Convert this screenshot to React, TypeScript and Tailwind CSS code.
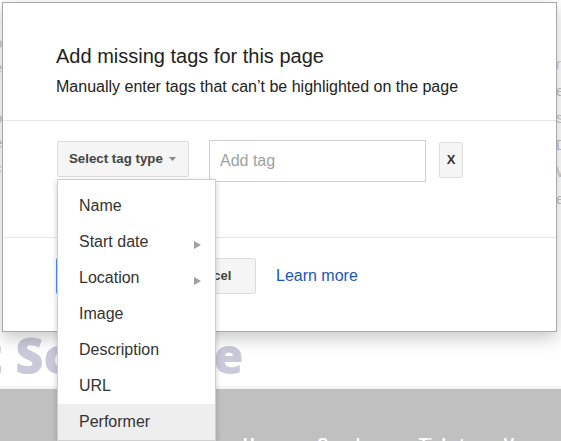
const MENU_ITEMS: { label: string; sub?: boolean; active?: boolean }[] = [
  { label: "Name" },
  { label: "Start date", sub: true },
  { label: "Location", sub: true },
  { label: "Image" },
  { label: "Description" },
  { label: "URL" },
  { label: "Performer", active: true },
];

// Page content sitting behind the dialog: only its edges peek out.
function BackgroundPage() {
  return (
    <div className="flex h-full flex-col">
      <div className="flex h-[333px] shrink-0 justify-between text-[15px] text-[#c4c4c4]">
        <div className="flex w-[4px] flex-col overflow-hidden pt-[30px] leading-[25px]">
          <span className="-ml-[6px]">o</span>
          <span className="-ml-[6px]">e</span>
          <span className="-ml-[6px]">&nbsp;</span>
          <span className="-ml-[6px]">o</span>
          <span className="-ml-[6px]">e</span>
          <span className="-ml-[6px]">c</span>
        </div>
        <div className="flex w-[5px] flex-col overflow-hidden pt-[50px] leading-[27px]">
          <span className="text-[#d8d0b8]">r</span>
          <span>e,</span>
          <span>s</span>
          <span>D</span>
          <span>W</span>
          <span>e</span>
        </div>
      </div>
      <div className="flex h-[53px] shrink-0 items-start overflow-hidden">
        <span className="-ml-[20px] -mt-[8px] font-['Open_Sans',sans-serif] text-[49px] font-extrabold leading-[60px] whitespace-nowrap text-[#c9c9d9]">
          t Schedule
        </span>
      </div>
      <div className="h-[3px] shrink-0 bg-[#f4f4f4]" />
      <div className="h-[60px] shrink-0 bg-[#c0c0c0] pt-[44px] pl-[243px]">
        <div className="flex gap-[30px] text-[16px] font-bold whitespace-nowrap text-white">
          <span>Home</span>
          <span>Speakers</span>
          <span>Tickets</span>
          <span>Venue</span>
          <span>Conf</span>
        </div>
      </div>
    </div>
  );
}

function TagTypeMenu() {
  return (
    <div className="absolute top-[179px] left-[57px] w-[159px] border border-[#cfcfcf] bg-white pt-[8px] shadow-[0_2px_6px_rgba(0,0,0,0.2)]">
      {MENU_ITEMS.map((item) => (
        <div
          key={item.label}
          className={`flex h-[36px] items-center justify-between pr-[14px] pl-[21px] text-[16px] text-[#333] ${
            item.active ? "bg-[#eeeeee]" : ""
          }`}
        >
          <span>{item.label}</span>
          {item.sub && (
            <svg width="7" height="8" viewBox="0 0 7 8" className="mt-[5px]">
              <path d="M0 0L7 4L0 8Z" fill="#a0a0a0" />
            </svg>
          )}
        </div>
      ))}
    </div>
  );
}

export default function App() {
  return (
    <div className="relative h-[441px] w-[561px] overflow-hidden bg-white font-['Liberation_Sans',Arial,sans-serif]">
      <BackgroundPage />

      {/* dialog */}
      <div className="absolute top-[2px] left-[2px] flex h-[330px] w-[555px] flex-col border border-[#a8a8a8] bg-white shadow-[0_6px_16px_rgba(0,0,0,0.22)]">
        <div className="h-[118px] border-b border-[#e5e5e5] px-[53px] pt-[41px]">
          <h1 className="text-[20px] leading-[24px] text-[#222]">Add missing tags for this page</h1>
          <p className="mt-[9px] text-[16px] leading-[20px] text-[#222]">
            Manually enter tags that can’t be highlighted on the page
          </p>
        </div>

        <div className="h-[117px] border-b border-[#e5e5e5] px-[54px] pt-[19px]">
          <div className="flex items-start">
            <button className="mt-[1px] flex h-[36px] w-[132px] items-center gap-[6px] rounded-[2px] border border-[#dcdcdc] bg-[#f5f5f5] pl-[11px] text-[13.3px] font-bold text-[#444]">
              Select tag type
              <svg width="7" height="4" viewBox="0 0 7 4">
                <path d="M0 0H7L3.5 4Z" fill="#888" />
              </svg>
            </button>
            <div className="ml-[20px] flex h-[42px] w-[217px] items-center border border-[#d0d0d0] px-[10px] text-[16px] text-[#a0a0a0]">
              Add tag
            </div>
            <button className="mt-[2px] ml-[13px] flex h-[36px] w-[24px] items-center justify-center rounded-[2px] border border-[#dcdcdc] bg-[#f5f5f5] text-[13px] font-bold text-[#333]">
              X
            </button>
          </div>
          <div className="mt-[18px] text-[14px] text-[#444]">Add more</div>
        </div>

        <div className="flex items-center px-[53px] pt-[20px]">
          <button className="h-[36px] w-[100px] rounded-[2px] bg-[#4d90fe] text-[13px] font-bold text-white">
            Save tags
          </button>
          <button className="ml-[8px] h-[36px] w-[92px] rounded-[2px] border border-[#dcdcdc] bg-[#f5f5f5] text-[13px] font-bold text-[#444]">
            Cancel
          </button>
          <a className="ml-[20px] text-[16px] text-[#1a57b8]">Learn more</a>
        </div>
      </div>

      <TagTypeMenu />
    </div>
  );
}
